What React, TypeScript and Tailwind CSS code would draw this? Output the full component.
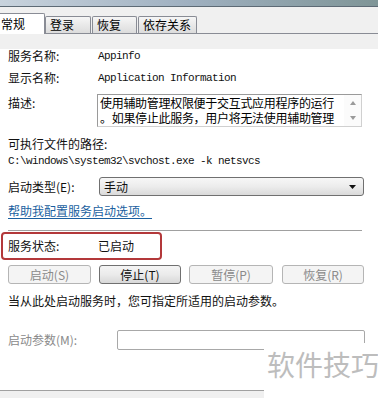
const cjk = "font-['Noto_Sans_CJK_SC','Noto_Sans',sans-serif]";
const mono = "font-['Liberation_Mono','Noto_Sans_CJK_SC',monospace] text-[11px] tracking-[-0.6px]";

// 服务按钮
const SvcButton = ({ label, width, enabled }: { label: string; width: string; enabled?: boolean }) => (
  <div
    className={`${width} h-[19px] flex items-center justify-center rounded-[3px] border text-[12px] leading-none ${
      enabled
        ? 'border-[#707070] bg-gradient-to-b from-[#f4f4f4] via-[#ebebeb] to-[#d8d8d8] text-[#111]'
        : 'border-[#b5b5b5] bg-[#f4f4f4] text-[#8a8a8a]'
    }`}
  >
    {label}
  </div>
);

const Tab = ({ label, width, active }: { label: string; width: string; active?: boolean }) =>
  active ? (
    <div className={`${width} h-[21px] -mb-px bg-white border border-l-0 border-b-0 border-[#898c95] rounded-tr-[2px] pl-[1px] pt-[3px] text-[12px] leading-[14px] text-black z-10`}>
      {label}
    </div>
  ) : (
    <div className={`${width} h-[17px] bg-gradient-to-b from-[#f6f6f6] to-[#dcdcdc] border border-b-0 border-[#898c95] rounded-t-[2px] pl-[4px] pt-[1px] text-[12px] leading-[14px] text-black`}>
      {label}
    </div>
  );

export default function App() {
  return (
    <div className={`relative w-[378px] h-[398px] overflow-hidden bg-[#f0f0f0] ${cjk} text-[#111]`}>
      {/* 上部ぼかし */}
      <div className="h-[7px] bg-gradient-to-r from-[#c8d3dd] via-[#9fb0c0] to-[#7f9597] border-b border-[#5d6a75]" />

      {/* タブ */}
      <div className="h-[27px] flex items-end border-b border-[#898c95]">
        <Tab label="常规" width="w-[45px]" active />
        <Tab label="登录" width="w-[46px]" />
        <Tab label="恢复" width="w-[45px] ml-px" />
        <Tab label="依存关系" width="w-[59px] ml-px" />
      </div>

      {/* 本体 */}
      <div className="h-[342px] bg-white border-b border-[#a0a0a0] px-[8px] text-[12px]">
        <div className="mt-[15px] h-[14px] flex items-center leading-[14px]">
          <span className="w-[90px]">服务名称:</span>
          <span className={mono}>Appinfo</span>
        </div>
        <div className="mt-[8px] h-[14px] flex items-center leading-[14px]">
          <span className="w-[90px]">显示名称:</span>
          <span className={mono}>Application Information</span>
        </div>
        <div className="mt-[9px] h-[33px] flex">
          <span className="w-[89px] pt-[2px] leading-[14px]">描述:</span>
          <div className="w-[265px] h-[33px] flex border border-[#9a9a9a] border-r-[#d0d0d0] border-b-[#d0d0d0]">
            <div className="flex-1 pl-[2px] text-[12px] leading-[15px] tracking-[-0.3px] text-black overflow-hidden">
              <div>使用辅助管理权限便于交互式应用程序的运行</div>
              <div>。如果停止此服务，用户将无法使用辅助管理</div>
            </div>
            <div className="w-[17px] flex flex-col items-center justify-between py-[6px] bg-[#fbfbfb]">
              <svg width="6" height="4" viewBox="0 0 6 4"><path d="M3 0 L6 4 L0 4 Z" fill="#9a9a9a" /></svg>
              <svg width="6" height="4" viewBox="0 0 6 4"><path d="M0 0 L6 0 L3 4 Z" fill="#9a9a9a" /></svg>
            </div>
          </div>
        </div>
        <div className="mt-[10px] h-[14px] leading-[14px]">可执行文件的路径:</div>
        <div className={`mt-[3px] h-[14px] leading-[14px] ${mono}`}>C:\windows\system32\svchost.exe -k netsvcs</div>
        <div className="mt-[9px] h-[19px] flex items-center">
          <span className="w-[91px]">启动类型(E):</span>
          <div className="w-[265px] h-[19px] flex items-center justify-between rounded-[3px] border border-[#707070] bg-gradient-to-b from-[#f7f7f7] via-[#ececec] to-[#dadada] pl-[4px] pr-[7px]">
            <span>手动</span>
            <svg width="7" height="4" viewBox="0 0 7 4"><path d="M0 0 L7 0 L3.5 4 Z" fill="#111" /></svg>
          </div>
        </div>
        <div className="mt-[8px] h-[14px] leading-[14px] text-[#1a5fa0] underline underline-offset-2">帮助我配置服务启动选项。</div>
        <div className="mt-[12px] h-px bg-[#a0a0a0] w-[354px]" />
        <div className="-ml-[7px] mt-px w-[161px] h-[28px] border-2 border-[#b3383a] rounded-[4px] flex items-center pl-[5px]">
          <span className="w-[90px]">服务状态:</span>
          <span>已启动</span>
        </div>
        <div className="mt-[5px] flex gap-[8px]">
          <SvcButton label="启动(S)" width="w-[83px]" />
          <SvcButton label="停止(T)" width="w-[82px]" enabled />
          <SvcButton label="暂停(P)" width="w-[84px]" />
          <SvcButton label="恢复(R)" width="w-[82px] ml-px" />
        </div>
        <div className="mt-[10px] h-[14px] leading-[14px]">当从此处启动服务时，您可指定所适用的启动参数。</div>
        <div className="mt-[22px] h-[20px] flex items-center">
          <span className="w-[109px] text-[#8a8a8a]">启动参数(M):</span>
          <div className="w-[248px] h-[20px] border border-[#a8a8a8] rounded-[2px] bg-white" />
        </div>
      </div>

      {/* 下部ボタン */}
      <div className="flex pl-[149px] pt-[8px] gap-[8px] text-[12px]">
        <div className="w-[73px] h-[23px] rounded-[3px] border border-[#707070] bg-gradient-to-b from-[#f4f4f4] to-[#dedede] flex justify-center pt-[3px] leading-[14px]">确定</div>
        <div className="w-[73px] h-[23px] rounded-[3px] border border-[#707070] bg-gradient-to-b from-[#f4f4f4] to-[#dedede] flex justify-center pt-[3px] leading-[14px]">取消</div>
      </div>

      {/* 透かし */}
      <div className="absolute right-0 bottom-0 w-[114px] h-[55px] bg-white pl-[3px] pt-[7px] text-[28px] leading-[28px] text-[#bdbdbd] whitespace-nowrap">
        软件技巧
      </div>
    </div>
  );
}
